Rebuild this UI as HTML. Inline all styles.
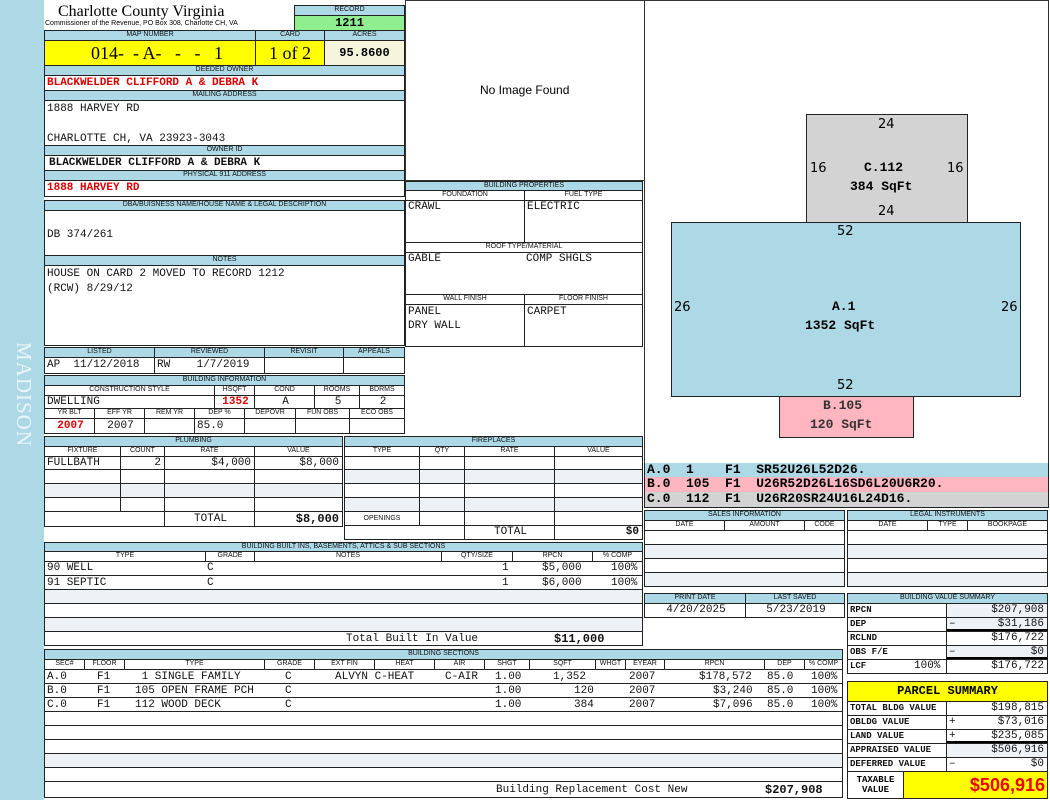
<!DOCTYPE html>
<html><head><meta charset="utf-8"><style>
*{margin:0;padding:0}
body{width:1050px;height:800px;position:relative;background:#fff;overflow:hidden;font-family:"Liberation Mono",monospace}
.c{position:absolute;box-sizing:border-box;border:1px solid #222;overflow:hidden;white-space:nowrap}
.h{background:#add8e6;font:7px "Liberation Sans",sans-serif;text-align:center;line-height:8px;color:#111}
.w{background:#fff;font:7px "Liberation Sans",sans-serif;text-align:center;line-height:8px;color:#111}
.v{font-size:11px;line-height:12px;padding-left:2px;color:#111}
.r{text-align:right;padding-right:3px}
.s{padding-right:3px}
.s span{float:right}
.ce{text-align:center}
.b{font-weight:bold}
.red{color:#d00;font-weight:bold}
.g{background:#eef2f7}
.t{position:absolute;white-space:nowrap}
</style></head><body>
<div class="t" style="left:0;top:0;width:44px;height:800px;background:#add8e6"></div>
<div class="t" style="left:11px;top:342px;font:21px 'Liberation Serif',serif;color:#eaf5f9;writing-mode:vertical-rl;letter-spacing:1px">MADISON</div>

<!-- header -->
<div class="t" style="left:58px;top:3px;font:16px 'Liberation Serif',serif;color:#000">Charlotte County Virginia</div>
<div class="t" style="left:45px;top:20px;font:7px 'Liberation Sans',sans-serif;color:#000">Commissioner of the Revenue, PO Box 308, Charlotte CH, VA</div>
<div class="c h" style="left:294px;top:5px;width:111px;height:11px">RECORD</div>
<div class="c" style="left:294px;top:15px;width:111px;height:16px;background:#90ee90;font:bold 12px 'Liberation Mono';text-align:center;line-height:14px">1211</div>
<div class="c h" style="left:44px;top:30px;width:212px;height:11px">MAP NUMBER</div>
<div class="c h" style="left:255px;top:30px;width:70px;height:11px">CARD</div>
<div class="c h" style="left:324px;top:30px;width:81px;height:11px">ACRES</div>
<div class="c" style="left:44px;top:40px;width:212px;height:26px;background:#ffff00;font:18px 'Liberation Serif',serif;line-height:24px;padding-left:46px">014- &nbsp;- A- &nbsp;&nbsp;- &nbsp;&nbsp;- &nbsp;&nbsp;1</div>
<div class="c" style="left:255px;top:40px;width:70px;height:26px;background:#ffff00;font:18px 'Liberation Serif',serif;line-height:24px;text-align:center">1 of 2</div>
<div class="c" style="left:324px;top:40px;width:81px;height:26px;background:#f5f5dc;font:bold 12px 'Liberation Mono';line-height:24px;text-align:center">95.8600</div>
<div class="c h" style="left:44px;top:65px;width:361px;height:11px">DEEDED OWNER</div>
<div class="c v red" style="left:44px;top:75px;width:361px;height:16px;line-height:14px">BLACKWELDER CLIFFORD A &amp; DEBRA K</div>
<div class="c h" style="left:44px;top:90px;width:361px;height:11px">MAILING ADDRESS</div>
<div class="c v" style="left:44px;top:100px;width:361px;height:46px;line-height:15px;padding-top:1px">1888 HARVEY RD<br><br>CHARLOTTE CH, VA 23923-3043</div>
<div class="c h" style="left:44px;top:145px;width:361px;height:11px">OWNER ID</div>
<div class="c v b" style="left:44px;top:155px;width:361px;height:16px;line-height:14px;padding-left:4px">BLACKWELDER CLIFFORD A &amp; DEBRA K</div>
<div class="c h" style="left:44px;top:170px;width:361px;height:11px">PHYSICAL 911 ADDRESS</div>
<div class="c v red" style="left:44px;top:180px;width:361px;height:17px;line-height:15px">1888 HARVEY RD</div>
<div class="c h" style="left:44px;top:200px;width:361px;height:11px">DBA/BUISNESS NAME/HOUSE NAME &amp; LEGAL DESCRIPTION</div>
<div class="c v" style="left:44px;top:210px;width:361px;height:46px;padding-top:18px">DB 374/261</div>
<div class="c h" style="left:44px;top:255px;width:361px;height:11px">NOTES</div>
<div class="c v" style="left:44px;top:265px;width:361px;height:81px;line-height:15px;padding-top:1px">HOUSE ON CARD 2 MOVED TO RECORD 1212<br>(RCW) 8/29/12</div>

<!-- listed -->
<div class="c h" style="left:44px;top:347px;width:111px;height:11px">LISTED</div>
<div class="c h" style="left:154px;top:347px;width:111px;height:11px">REVIEWED</div>
<div class="c h" style="left:264px;top:347px;width:80px;height:11px">REVISIT</div>
<div class="c h" style="left:343px;top:347px;width:62px;height:11px">APPEALS</div>
<div class="c v" style="left:44px;top:357px;width:111px;height:17px;line-height:15px">AP &nbsp;11/12/2018</div>
<div class="c v" style="left:154px;top:357px;width:111px;height:17px;line-height:15px">RW &nbsp;&nbsp;&nbsp;1/7/2019</div>
<div class="c v" style="left:264px;top:357px;width:80px;height:17px"></div>
<div class="c v" style="left:343px;top:357px;width:62px;height:17px"></div>

<!-- building info -->
<div class="c h" style="left:44px;top:375px;width:361px;height:11px">BUILDING INFORMATION</div>
<div class="c w" style="left:44px;top:385px;width:171px;height:11px">CONSTRUCTION STYLE</div>
<div class="c w" style="left:214px;top:385px;width:41px;height:11px">HSQFT</div>
<div class="c w" style="left:254px;top:385px;width:61px;height:11px">COND</div>
<div class="c w" style="left:314px;top:385px;width:46px;height:11px">ROOMS</div>
<div class="c w" style="left:359px;top:385px;width:46px;height:11px">BDRMS</div>
<div class="c v" style="left:44px;top:395px;width:171px;height:14px">DWELLING</div>
<div class="c v red ce" style="left:214px;top:395px;width:41px;height:14px">1352</div>
<div class="c v ce" style="left:254px;top:395px;width:61px;height:14px">A</div>
<div class="c v ce" style="left:314px;top:395px;width:46px;height:14px">5</div>
<div class="c v ce" style="left:359px;top:395px;width:46px;height:14px">2</div>
<div class="c w" style="left:44px;top:408px;width:51px;height:11px">YR BLT</div>
<div class="c w" style="left:94px;top:408px;width:51px;height:11px">EFF YR</div>
<div class="c w" style="left:144px;top:408px;width:51px;height:11px">REM YR</div>
<div class="c w" style="left:194px;top:408px;width:51px;height:11px">DEP %</div>
<div class="c w" style="left:244px;top:408px;width:52px;height:11px">DEPOVR</div>
<div class="c w" style="left:295px;top:408px;width:55px;height:11px">FUN OBS</div>
<div class="c w" style="left:349px;top:408px;width:56px;height:11px">ECO OBS</div>
<div class="c v red ce" style="left:44px;top:418px;width:51px;height:16px;line-height:14px">2007</div>
<div class="c v ce" style="left:94px;top:418px;width:51px;height:16px;line-height:14px">2007</div>
<div class="c v" style="left:144px;top:418px;width:51px;height:16px"></div>
<div class="c v" style="left:194px;top:418px;width:51px;height:16px;line-height:14px">85.0</div>
<div class="c v" style="left:244px;top:418px;width:52px;height:16px"></div>
<div class="c v" style="left:295px;top:418px;width:55px;height:16px"></div>
<div class="c v" style="left:349px;top:418px;width:56px;height:16px"></div>

<!-- plumbing -->
<div class="c h" style="left:44px;top:436px;width:299px;height:11px">PLUMBING</div>
<div class="c w" style="left:44px;top:446px;width:77px;height:11px">FIXTURE</div>
<div class="c w" style="left:120px;top:446px;width:45px;height:11px">COUNT</div>
<div class="c w" style="left:164px;top:446px;width:91px;height:11px">RATE</div>
<div class="c w" style="left:254px;top:446px;width:89px;height:11px">VALUE</div>
<div class="c v" style="left:44px;top:456px;width:77px;height:14px">FULLBATH</div>
<div class="c v r" style="left:120px;top:456px;width:45px;height:14px">2</div>
<div class="c v r" style="left:164px;top:456px;width:91px;height:14px">$4,000</div>
<div class="c v r" style="left:254px;top:456px;width:89px;height:14px">$8,000</div>
<div class="c" style="left:44px;top:469px;width:77px;height:15px"></div><div class="c" style="left:120px;top:469px;width:45px;height:15px"></div><div class="c" style="left:164px;top:469px;width:91px;height:15px"></div><div class="c" style="left:254px;top:469px;width:89px;height:15px"></div>
<div class="c g" style="left:44px;top:483px;width:77px;height:15px"></div><div class="c g" style="left:120px;top:483px;width:45px;height:15px"></div><div class="c g" style="left:164px;top:483px;width:91px;height:15px"></div><div class="c g" style="left:254px;top:483px;width:89px;height:15px"></div>
<div class="c" style="left:44px;top:497px;width:77px;height:15px"></div><div class="c" style="left:120px;top:497px;width:45px;height:15px"></div><div class="c" style="left:164px;top:497px;width:91px;height:15px"></div><div class="c" style="left:254px;top:497px;width:89px;height:15px"></div>
<div class="c" style="left:44px;top:511px;width:121px;height:16px"></div>
<div class="c v ce" style="left:164px;top:511px;width:91px;height:16px;line-height:14px">TOTAL</div>
<div class="c v r b" style="left:254px;top:511px;width:89px;height:16px;font-size:12px;line-height:14px">$8,000</div>

<!-- fireplaces -->
<div class="c h" style="left:344px;top:436px;width:299px;height:11px">FIREPLACES</div>
<div class="c w" style="left:344px;top:446px;width:76px;height:11px">TYPE</div>
<div class="c w" style="left:419px;top:446px;width:46px;height:11px">QTY</div>
<div class="c w" style="left:464px;top:446px;width:91px;height:11px">RATE</div>
<div class="c w" style="left:554px;top:446px;width:89px;height:11px">VALUE</div>
<div class="c" style="left:344px;top:456px;width:76px;height:14px"></div><div class="c" style="left:419px;top:456px;width:46px;height:14px"></div><div class="c" style="left:464px;top:456px;width:91px;height:14px"></div><div class="c" style="left:554px;top:456px;width:89px;height:14px"></div>
<div class="c g" style="left:344px;top:469px;width:76px;height:15px"></div><div class="c g" style="left:419px;top:469px;width:46px;height:15px"></div><div class="c g" style="left:464px;top:469px;width:91px;height:15px"></div><div class="c g" style="left:554px;top:469px;width:89px;height:15px"></div>
<div class="c" style="left:344px;top:483px;width:76px;height:15px"></div><div class="c" style="left:419px;top:483px;width:46px;height:15px"></div><div class="c" style="left:464px;top:483px;width:91px;height:15px"></div><div class="c" style="left:554px;top:483px;width:89px;height:15px"></div>
<div class="c g" style="left:344px;top:497px;width:76px;height:15px"></div><div class="c g" style="left:419px;top:497px;width:46px;height:15px"></div><div class="c g" style="left:464px;top:497px;width:91px;height:15px"></div><div class="c g" style="left:554px;top:497px;width:89px;height:15px"></div>
<div class="c w" style="left:344px;top:511px;width:76px;height:15px;line-height:13px">OPENINGS</div><div class="c" style="left:419px;top:511px;width:46px;height:15px"></div><div class="c" style="left:464px;top:511px;width:91px;height:15px"></div><div class="c" style="left:554px;top:511px;width:89px;height:15px"></div>
<div class="c" style="left:344px;top:525px;width:121px;height:15px"></div>
<div class="c v ce" style="left:464px;top:525px;width:91px;height:15px;line-height:13px">TOTAL</div>
<div class="c v r b" style="left:554px;top:525px;width:89px;height:15px;line-height:13px">$0</div>

<!-- built ins -->
<div class="c h" style="left:44px;top:542px;width:599px;height:10px;line-height:7px">BUILDING BUILT INS, BASEMENTS, ATTICS &amp; SUB SECTIONS</div>
<div class="c w" style="left:44px;top:551px;width:162px;height:11px">TYPE</div>
<div class="c w" style="left:205px;top:551px;width:50px;height:11px">GRADE</div>
<div class="c w" style="left:254px;top:551px;width:188px;height:11px">NOTES</div>
<div class="c w" style="left:441px;top:551px;width:72px;height:11px">QTY/SIZE</div>
<div class="c w" style="left:512px;top:551px;width:81px;height:11px">RPCN</div>
<div class="c w" style="left:592px;top:551px;width:51px;height:11px">% COMP</div>
<div class="c v" style="left:44px;top:561px;width:599px;height:15px;border-width:0 1px"><span class="t" style="left:2px;top:1px">90 WELL</span><span class="t" style="left:162px;top:1px">C</span><span class="t" style="left:457px;top:1px">1</span><span class="t" style="left:497px;top:1px">$5,000</span><span class="t" style="left:566px;top:1px">100%</span></div>
<div class="c v" style="left:44px;top:575px;width:599px;height:15px;border-width:1px 1px 0"><span class="t" style="left:2px;top:1px">91 SEPTIC</span><span class="t" style="left:162px;top:1px">C</span><span class="t" style="left:457px;top:1px">1</span><span class="t" style="left:497px;top:1px">$6,000</span><span class="t" style="left:566px;top:1px">100%</span></div>
<div class="c g" style="left:44px;top:589px;width:599px;height:15px"></div>
<div class="c" style="left:44px;top:603px;width:599px;height:15px"></div>
<div class="c g" style="left:44px;top:617px;width:599px;height:15px"></div>
<div class="c v" style="left:44px;top:631px;width:599px;height:15px"><span class="t" style="left:301px;top:1px">Total Built In Value</span><span class="t b" style="left:509px;top:1px;font-size:12px">$11,000</span></div>

<!-- building sections -->
<div class="c h" style="left:44px;top:649px;width:799px;height:11px">BUILDING SECTIONS</div>
<div class="c w" style="left:44px;top:659px;width:41px;height:11px">SEC#</div>
<div class="c w" style="left:84px;top:659px;width:41px;height:11px">FLOOR</div>
<div class="c w" style="left:124px;top:659px;width:141px;height:11px">TYPE</div>
<div class="c w" style="left:264px;top:659px;width:51px;height:11px">GRADE</div>
<div class="c w" style="left:314px;top:659px;width:61px;height:11px">EXT FIN</div>
<div class="c w" style="left:374px;top:659px;width:61px;height:11px">HEAT</div>
<div class="c w" style="left:434px;top:659px;width:51px;height:11px">AIR</div>
<div class="c w" style="left:484px;top:659px;width:46px;height:11px">SHGT</div>
<div class="c w" style="left:529px;top:659px;width:67px;height:11px">SQFT</div>
<div class="c w" style="left:595px;top:659px;width:31px;height:11px">WHGT</div>
<div class="c w" style="left:625px;top:659px;width:40px;height:11px">EYEAR</div>
<div class="c w" style="left:664px;top:659px;width:101px;height:11px">RPCN</div>
<div class="c w" style="left:764px;top:659px;width:41px;height:11px">DEP</div>
<div class="c w" style="left:804px;top:659px;width:39px;height:11px">% COMP</div>
<div class="c v" style="left:44px;top:669px;width:799px;height:15px"><span class="t" style="left:2px;top:1px">A.0</span><span class="t" style="left:52px;top:1px">F1</span><span class="t" style="left:90px;top:1px">&nbsp;1 SINGLE FAMILY</span><span class="t" style="left:240px;top:1px">C</span><span class="t" style="left:290px;top:1px">ALVYN C-HEAT</span><span class="t" style="left:400px;top:1px">C-AIR</span><span class="t" style="left:450px;top:1px">1.00</span><span class="t" style="left:508px;top:1px">1,352</span><span class="t" style="left:584px;top:1px">2007</span><span class="t" style="left:654px;top:1px">$178,572</span><span class="t" style="left:722px;top:1px">85.0</span><span class="t" style="left:766px;top:1px">100%</span></div>
<div class="c v" style="left:44px;top:683px;width:799px;height:15px"><span class="t" style="left:2px;top:1px">B.0</span><span class="t" style="left:52px;top:1px">F1</span><span class="t" style="left:90px;top:1px">105 OPEN FRAME PCH</span><span class="t" style="left:240px;top:1px">C</span><span class="t" style="left:450px;top:1px">1.00</span><span class="t" style="left:529px;top:1px">120</span><span class="t" style="left:584px;top:1px">2007</span><span class="t" style="left:668px;top:1px">$3,240</span><span class="t" style="left:722px;top:1px">85.0</span><span class="t" style="left:766px;top:1px">100%</span></div>
<div class="c v" style="left:44px;top:697px;width:799px;height:15px"><span class="t" style="left:2px;top:1px">C.0</span><span class="t" style="left:52px;top:1px">F1</span><span class="t" style="left:90px;top:1px">112 WOOD DECK</span><span class="t" style="left:240px;top:1px">C</span><span class="t" style="left:450px;top:1px">1.00</span><span class="t" style="left:529px;top:1px">384</span><span class="t" style="left:584px;top:1px">2007</span><span class="t" style="left:668px;top:1px">$7,096</span><span class="t" style="left:722px;top:1px">85.0</span><span class="t" style="left:766px;top:1px">100%</span></div>
<div class="c" style="left:44px;top:711px;width:799px;height:15px"></div>
<div class="c" style="left:44px;top:725px;width:799px;height:15px"></div>
<div class="c" style="left:44px;top:739px;width:799px;height:15px"></div>
<div class="c g" style="left:44px;top:753px;width:799px;height:15px"></div>
<div class="c" style="left:44px;top:767px;width:799px;height:15px"></div>
<div class="c v" style="left:44px;top:781px;width:799px;height:17px"><span class="t" style="left:451px;top:2px">Building Replacement Cost New</span><span class="t b" style="left:720px;top:2px;font-size:12px">$207,908</span></div>

<!-- image + building props -->
<div class="c" style="left:405px;top:0;width:240px;height:181px;border-color:#333"><span class="t" style="left:74px;top:82px;font:12px 'Liberation Sans',sans-serif">No Image Found</span></div>
<div class="c h" style="left:405px;top:181px;width:238px;height:10px;line-height:8px">BUILDING PROPERTIES</div>
<div class="c w" style="left:405px;top:190px;width:120px;height:11px">FOUNDATION</div>
<div class="c w" style="left:524px;top:190px;width:119px;height:11px">FUEL TYPE</div>
<div class="c v" style="left:405px;top:200px;width:120px;height:43px">CRAWL</div>
<div class="c v" style="left:524px;top:200px;width:119px;height:43px">ELECTRIC</div>
<div class="c w" style="left:405px;top:242px;width:238px;height:11px">ROOF TYPE/MATERIAL</div>
<div class="c v" style="left:405px;top:252px;width:238px;height:43px">GABLE<span class="t" style="left:120px;top:0">COMP SHGLS</span></div>
<div class="c w" style="left:405px;top:294px;width:120px;height:11px">WALL FINISH</div>
<div class="c w" style="left:524px;top:294px;width:119px;height:11px">FLOOR FINISH</div>
<div class="c v" style="left:405px;top:304px;width:120px;height:43px;line-height:14px">PANEL<br>DRY WALL</div>
<div class="c v" style="left:524px;top:304px;width:119px;height:43px;line-height:14px">CARPET</div>

<!-- sketch -->
<div class="c" style="left:644px;top:0;width:405px;height:464px;border-color:#333"></div>
<div class="c" style="left:806px;top:114px;width:162px;height:109px;background:#d3d3d3"></div>
<div class="c" style="left:671px;top:222px;width:350px;height:175px;background:#add8e6"></div>
<div class="c" style="left:779px;top:396px;width:135px;height:42px;background:#ffb6c1"></div>
<div class="t" style="left:878px;top:117px;font:13px 'DejaVu Sans',sans-serif">24</div>
<div class="t" style="left:810px;top:161px;font:13px 'DejaVu Sans',sans-serif">16</div>
<div class="t" style="left:947px;top:161px;font:13px 'DejaVu Sans',sans-serif">16</div>
<div class="t" style="left:864px;top:160px;font:bold 13px 'Liberation Mono'">C.112</div>
<div class="t" style="left:850px;top:179px;font:bold 13px 'Liberation Mono'">384 SqFt</div>
<div class="t" style="left:878px;top:204px;font:13px 'DejaVu Sans',sans-serif">24</div>
<div class="t" style="left:837px;top:224px;font:13px 'DejaVu Sans',sans-serif">52</div>
<div class="t" style="left:674px;top:300px;font:13px 'DejaVu Sans',sans-serif">26</div>
<div class="t" style="left:1001px;top:300px;font:13px 'DejaVu Sans',sans-serif">26</div>
<div class="t" style="left:832px;top:299px;font:bold 13px 'Liberation Mono'">A.1</div>
<div class="t" style="left:805px;top:318px;font:bold 13px 'Liberation Mono'">1352 SqFt</div>
<div class="t" style="left:837px;top:378px;font:13px 'DejaVu Sans',sans-serif">52</div>
<div class="t" style="left:823px;top:398px;font:bold 13px 'Liberation Mono';color:#333">B.105</div>
<div class="t" style="left:810px;top:417px;font:bold 13px 'Liberation Mono';color:#333">120 SqFt</div>

<div class="c" style="left:644px;top:463px;width:405px;height:15px;background:#add8e6;border-width:0 1px;font:bold 13px 'Liberation Mono';line-height:14px;padding-left:2px">A.0&nbsp;&nbsp;1&nbsp;&nbsp;&nbsp;&nbsp;F1&nbsp;&nbsp;SR52U26L52D26.</div>
<div class="c" style="left:644px;top:477px;width:405px;height:15px;background:#ffb6c1;border-width:0 1px;font:bold 13px 'Liberation Mono';line-height:14px;padding-left:2px">B.0&nbsp;&nbsp;105&nbsp;&nbsp;F1&nbsp;&nbsp;U26R52D26L16SD6L20U6R20.</div>
<div class="c" style="left:644px;top:492px;width:405px;height:16px;background:#d3d3d3;border-width:0 1px 1px;font:bold 13px 'Liberation Mono';line-height:14px;padding-left:2px">C.0&nbsp;&nbsp;112&nbsp;&nbsp;F1&nbsp;&nbsp;U26R20SR24U16L24D16.</div>

<!-- sales -->
<div class="c h" style="left:644px;top:510px;width:201px;height:11px">SALES INFORMATION</div>
<div class="c w" style="left:644px;top:520px;width:81px;height:11px">DATE</div>
<div class="c w" style="left:724px;top:520px;width:81px;height:11px">AMOUNT</div>
<div class="c w" style="left:804px;top:520px;width:41px;height:11px">CODE</div>
<div class="c" style="left:644px;top:530px;width:201px;height:15px"></div>
<div class="c g" style="left:644px;top:544px;width:201px;height:15px"></div>
<div class="c" style="left:644px;top:558px;width:201px;height:15px"></div>
<div class="c g" style="left:644px;top:572px;width:201px;height:15px"></div>
<div class="c h" style="left:847px;top:510px;width:201px;height:11px">LEGAL INSTRUMENTS</div>
<div class="c w" style="left:847px;top:520px;width:81px;height:11px">DATE</div>
<div class="c w" style="left:927px;top:520px;width:41px;height:11px">TYPE</div>
<div class="c w" style="left:967px;top:520px;width:81px;height:11px">BOOKPAGE</div>
<div class="c" style="left:847px;top:530px;width:201px;height:15px"></div>
<div class="c g" style="left:847px;top:544px;width:201px;height:15px"></div>
<div class="c" style="left:847px;top:558px;width:201px;height:15px"></div>
<div class="c g" style="left:847px;top:572px;width:201px;height:15px"></div>

<div class="c h" style="left:644px;top:593px;width:102px;height:11px">PRINT DATE</div>
<div class="c h" style="left:745px;top:593px;width:100px;height:11px">LAST SAVED</div>
<div class="c v ce" style="left:644px;top:603px;width:102px;height:15px;line-height:13px">4/20/2025</div>
<div class="c v ce" style="left:745px;top:603px;width:100px;height:15px;line-height:13px">5/23/2019</div>

<!-- value summary -->
<div class="c h" style="left:847px;top:593px;width:201px;height:11px">BUILDING VALUE SUMMARY</div>
<div class="c v b" style="left:847px;top:603px;width:100px;height:15px;font-size:9px">RPCN</div>
<div class="c v r g" style="left:946px;top:603px;width:102px;height:15px">$207,908</div>
<div class="c v b" style="left:847px;top:617px;width:100px;height:15px;font-size:9px">DEP</div>
<div class="c v s g" style="left:946px;top:617px;width:102px;height:15px;border-bottom:3px solid #000">–<span>$31,186</span></div>
<div class="c v b" style="left:847px;top:631px;width:100px;height:15px;font-size:9px">RCLND</div>
<div class="c v r" style="left:946px;top:631px;width:102px;height:15px">$176,722</div>
<div class="c v b" style="left:847px;top:645px;width:100px;height:15px;font-size:9px">OBS F/E</div>
<div class="c v s g" style="left:946px;top:645px;width:102px;height:15px;border-bottom:3px solid #000">–<span>$0</span></div>
<div class="c v b" style="left:847px;top:659px;width:100px;height:15px;font-size:9px">LCF<span class="t" style="left:66px;top:0;font-weight:normal;font-size:11px">100%</span></div>
<div class="c v r" style="left:946px;top:659px;width:102px;height:15px">$176,722</div>

<!-- parcel summary -->
<div class="c" style="left:847px;top:681px;width:201px;height:21px;background:#ffff00;font:bold 12px 'Liberation Mono';text-align:center;line-height:19px">PARCEL SUMMARY</div>
<div class="c v b" style="left:847px;top:701px;width:100px;height:15px;font-size:9px">TOTAL BLDG VALUE</div>
<div class="c v r" style="left:946px;top:701px;width:102px;height:15px">$198,815</div>
<div class="c v b" style="left:847px;top:715px;width:100px;height:15px;font-size:9px">OBLDG VALUE</div>
<div class="c v s" style="left:946px;top:715px;width:102px;height:15px">+<span>$73,016</span></div>
<div class="c v b" style="left:847px;top:729px;width:100px;height:15px;font-size:9px">LAND VALUE</div>
<div class="c v s" style="left:946px;top:729px;width:102px;height:15px;border-bottom:3px solid #000">+<span>$235,085</span></div>
<div class="c v b" style="left:847px;top:743px;width:100px;height:15px;font-size:9px">APPRAISED VALUE</div>
<div class="c v r g" style="left:946px;top:743px;width:102px;height:15px">$506,916</div>
<div class="c v b" style="left:847px;top:757px;width:100px;height:15px;font-size:9px">DEFERRED VALUE</div>
<div class="c v s" style="left:946px;top:757px;width:102px;height:15px">–<span>$0</span></div>
<div class="c" style="left:847px;top:771px;width:57px;height:28px;font:bold 9px 'Liberation Mono';text-align:center;line-height:10px;padding-top:3px">TAXABLE<br>VALUE</div>
<div class="c" style="left:903px;top:771px;width:145px;height:28px;background:#ffff00;color:#e00;font:bold 18px 'Liberation Sans',sans-serif;text-align:right;padding-right:2px;line-height:26px">$506,916</div>
</body></html>
